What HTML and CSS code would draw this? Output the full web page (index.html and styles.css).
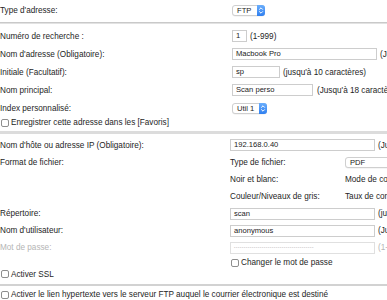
FILE: index.html
```html
<!DOCTYPE html>
<html lang="fr">
<head>
<meta charset="utf-8">
<title>FTP</title>
<link rel="stylesheet" href="styles.css">
</head>
<body>
<div class="page">
  <div class="row r-type">
    <span class="lbl">Type d'adresse:</span>
    <span class="val"><span class="sel sel-ftp">FTP<span class="sel-btn"><svg width="8" height="9" viewBox="0 0 8 9"><path d="M2.2 3.6 4 1.8 5.8 3.6M2.2 5.4 4 7.2 5.8 5.4" fill="none" stroke="#fff" stroke-width="1"/></svg></span></span></span>
  </div>
  <div class="sep sep1"></div>

  <div class="sec1">
    <div class="row"><span class="lbl">Numéro de recherche :</span><span class="val"><span class="inp w-num">1</span><span class="note">(1-999)</span></span></div>
    <div class="row"><span class="lbl">Nom d'adresse (Obligatoire):</span><span class="val"><span class="inp w-long">Macbook Pro</span><span class="note">(Jusqu'à 64 caractères)</span></span></div>
    <div class="row"><span class="lbl">Initiale (Facultatif):</span><span class="val"><span class="inp w-sp">sp</span><span class="note">(jusqu'à 10 caractères)</span></span></div>
    <div class="row"><span class="lbl">Nom principal:</span><span class="val"><span class="inp w-scan">Scan perso</span><span class="note note-wide">(Jusqu'à 18 caractères)</span></span></div>
    <div class="row"><span class="lbl">Index personnalisé:</span><span class="val"><span class="sel sel-util">Util 1<span class="sel-btn"><svg width="8" height="9" viewBox="0 0 8 9"><path d="M2.2 3.6 4 1.8 5.8 3.6M2.2 5.4 4 7.2 5.8 5.4" fill="none" stroke="#fff" stroke-width="1"/></svg></span></span></span></div>
    <div class="row r-check"><span class="chk"></span><span>Enregistrer cette adresse dans les [Favoris]</span></div>
  </div>
  <div class="sep sep2"></div>

  <div class="sec2">
    <div class="row r17 r-host"><span class="lbl">Nom d'hôte ou adresse IP (Obligatoire):</span><span class="val"><span class="inp w-long">192.168.0.40</span><span class="note">(Jusqu'à 64 caractères)</span></span></div>
    <div class="row r-format">
      <span class="lbl lbl-top">Format de fichier:</span>
      <div class="fmt">
        <span>Type de fichier:</span><span><span class="sel sel-pdf">PDF</span></span>
        <span>Noir et blanc:</span><span>Mode de compression:</span>
        <span>Couleur/Niveaux de gris:</span><span>Taux de compression:</span>
      </div>
    </div>
    <div class="row r17"><span class="lbl">Répertoire:</span><span class="val"><span class="inp w-long">scan</span><span class="note">(jusqu'à 60 caractères)</span></span></div>
    <div class="row r17"><span class="lbl">Nom d'utilisateur:</span><span class="val"><span class="inp w-long">anonymous</span><span class="note">(Jusqu'à 32 caractères)</span></span></div>
    <div class="row r17 dis"><span class="lbl">Mot de passe:</span><span class="val"><span class="inp w-long inp-dis"><span class="dots">••••••••••••••••••••••••••••••••••••••••</span></span><span class="note">(1-32 caractères)</span></span></div>
    <div class="row r-change"><span class="lbl"></span><span class="val"><span class="chk"></span><span>Changer le mot de passe</span></span></div>
    <div class="row r-ssl"><span class="chk"></span><span>Activer SSL</span></div>
  </div>
  <div class="sep sep3"></div>
  <div class="row r-link"><span class="chk"></span><span>Activer le lien hypertexte vers le serveur FTP auquel le courrier électronique est destiné</span></div>
</div>
</body>
</html>
```
FILE: styles.css
```css
html, body {
  margin: 0;
  padding: 0;
  background: #fff;
  overflow: hidden;
}
body {
  width: 387px;
  height: 300px;
  font-family: "Liberation Sans", Arial, sans-serif;
  font-size: 8.2px;
  color: #1e1e1e;
}
.page {
  display: flex;
  flex-direction: column;
}
.row {
  display: flex;
  align-items: center;
  height: 18px;
  white-space: nowrap;
}
.lbl {
  flex: none;
  width: 232px;
}
.sec2 .lbl { width: 230px; }
.val {
  display: flex;
  align-items: center;
  gap: 3px;
}
.r-type { height: 20px; }
.sec1 { padding-top: 3px; }
.sep { flex: none; }
.sep1 { margin-top: 2px; height: 1px; background: #c9c9c9; border-bottom: 1px solid #e2e2e2; }
.sep2 { margin-top: 3px; height: 3px; background: #dcdcdc; }
.sep3 { margin-top: 5px; height: 2px; background: #d2d2d2; }
.r-check { height: 11px; gap: 1px; }
.sec2 { padding-top: 2px; }
.r17 { height: 17px; }
.r-host { height: 18px; }
.r-format { height: 51px; align-items: flex-start; }
.lbl-top { padding-top: 4px; }
.fmt {
  display: grid;
  grid-template-columns: 115px auto;
  grid-auto-rows: 17px;
  align-items: center;
}
.inp {
  box-sizing: border-box;
  height: 12px;
  border: 1px solid #cdcdcd;
  background: #fff;
  padding: 0 3px;
  font-size: 7.6px;
  line-height: 10px;
  color: #222;
  overflow: hidden;
}
.w-num { width: 15px; }
.w-sp { width: 48px; }
.w-scan { width: 81px; }
.w-long { width: 145px; }
.note-wide { margin-left: 1px; }
.sel {
  position: relative;
  display: inline-block;
  vertical-align: middle;
  box-sizing: border-box;
  height: 11px;
  border: 1px solid #cfcfcf;
  border-radius: 3px;
  background: #fff;
  padding-left: 4px;
  font-size: 7.6px;
  line-height: 9px;
  color: #222;
  box-shadow: 0 0.5px 0.5px rgba(0,0,0,0.08);
}
.sel-ftp { width: 33px; }
.sel-util { width: 35px; }
.sel-pdf { width: 60px; }
.sel-btn {
  position: absolute;
  right: -1px;
  top: -1px;
  width: 8px;
  height: 11px;
  border-radius: 0 3px 3px 0;
  background: linear-gradient(#6aaefc, #2f7ff0);
  display: flex;
  align-items: center;
  justify-content: center;
}
.sel-btn svg { display: block; }
.chk {
  flex: none;
  box-sizing: border-box;
  width: 8px;
  height: 8px;
  margin-left: 1px;
  border: 1px solid #8e8e8e;
  border-radius: 2px;
  background: #fff;
}
.r-check .chk, .r-ssl .chk, .r-link .chk { margin-right: 1px; }
.r-change { height: 13px; }
.r-change .val { gap: 2px; }
.r-ssl { height: 10px; gap: 1px; }
.r-link { height: 13px; margin-top: 2px; gap: 1px; }
.dis { color: #b5b5b5; }
.inp-dis { border-color: #e0e0e0; }
.dots {
  font-size: 4px;
  color: #c8c8c8;
  letter-spacing: 0.6px;
  vertical-align: middle;
}
```
